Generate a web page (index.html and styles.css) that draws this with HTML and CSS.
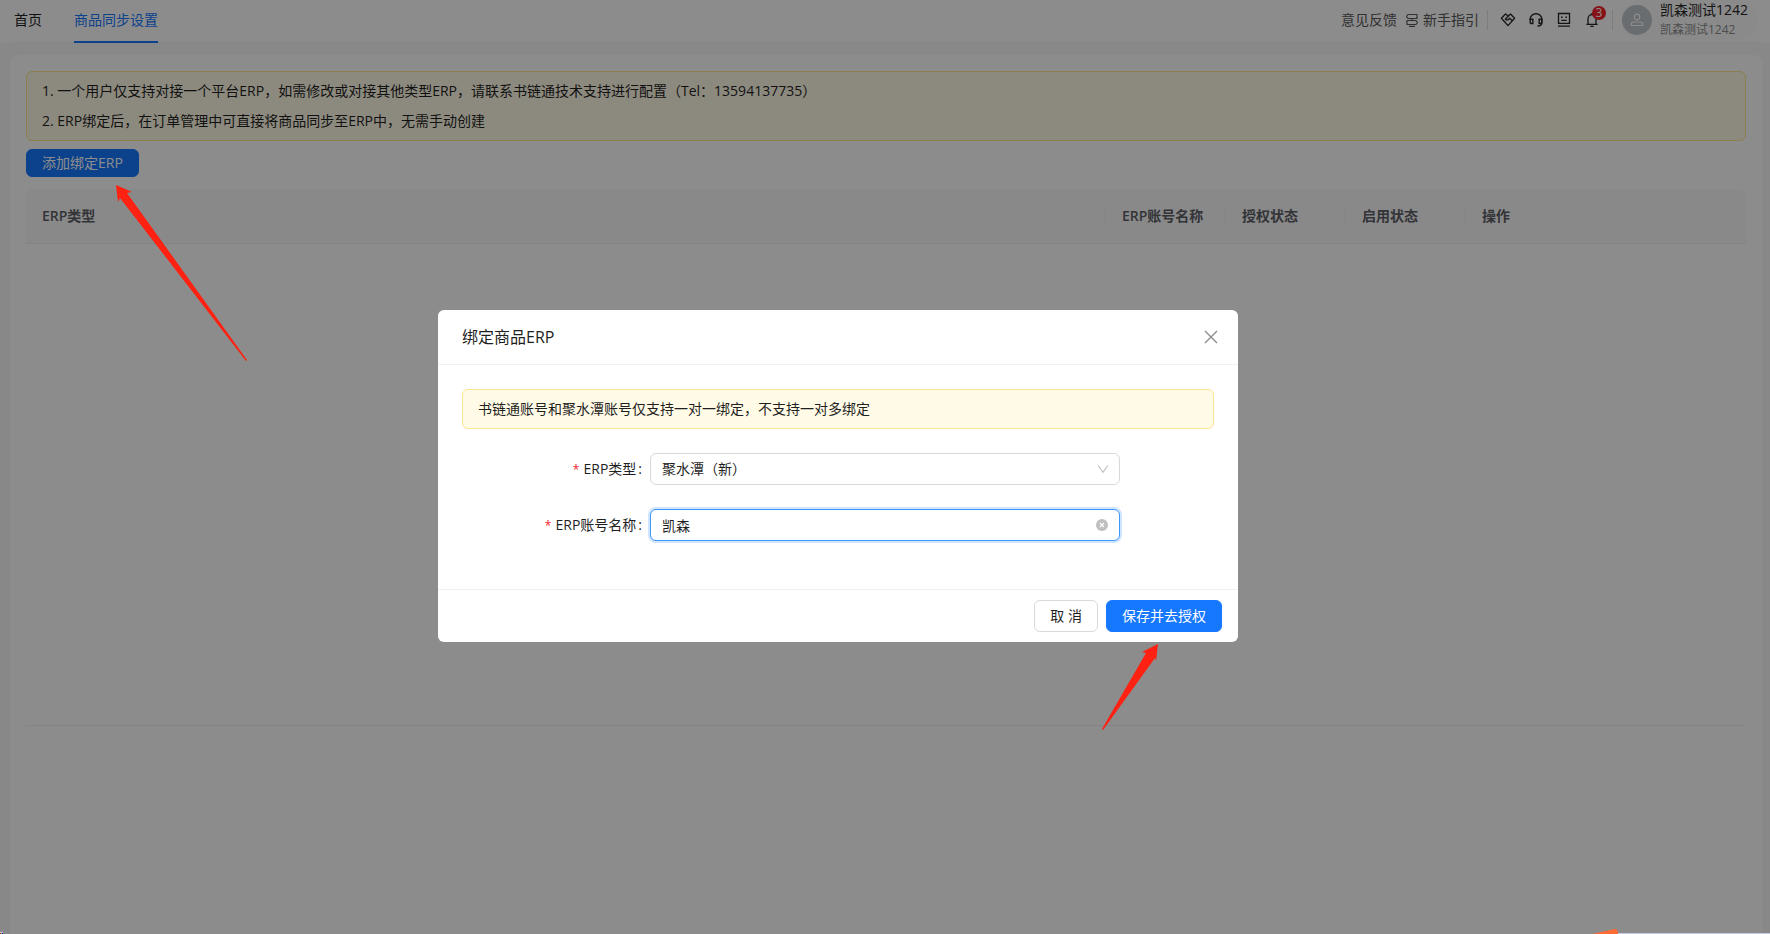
FILE: index.html
```html
<!DOCTYPE html>
<html lang="zh-CN">
<head>
<meta charset="utf-8">
<title>商品同步设置</title>
<link rel="stylesheet" href="styles.css">
</head>
<body>
<div class="page">
  <header class="header">
    <nav class="tabs">
      <a class="tab" href="#home">首页</a>
      <a class="tab tab-active" href="#sync">商品同步设置</a>
    </nav>
    <div class="tools">
      <a class="tool-link" href="#feedback">意见反馈</a>
      <a class="tool-link guide" href="#guide">
        <svg width="14" height="14" viewBox="0 0 14 14" fill="none" stroke="currentColor" stroke-width="1.2" stroke-linejoin="round"><path d="M3 1.500h9v4H3l-1.500-2zM11 7.500H2v4h9l1.500-2zM7 5.500v2M4 13.300h6"/></svg>
        新手指引
      </a>
      <span class="divider"></span>
      <div class="icons">
        <button class="icon-btn" aria-label="合作">
          <svg width="16" height="16" viewBox="0 0 16 16" fill="none" stroke="currentColor" stroke-width="1.300" stroke-linejoin="round"><path d="M8 3.800 5.500 2 1.400 6.200 8 13.600l6.600-7.400L10.500 2 5.400 7c1 1.300 2.300 1.200 3.300.2l.9-.9 3 2.700M3.600 8.600l2.200 2.400"/></svg>
        </button>
        <button class="icon-btn" aria-label="客服">
          <svg width="16" height="16" viewBox="0 0 16 16" fill="none" stroke="currentColor" stroke-width="1.400"><path d="M2.200 8V7a5.800 5.300 0 0 1 11.600 0v4c0 2.500-1.500 3-4.300 3"/><path d="M2.200 7.200h2.600v4.300H3.300a1.100 1.100 0 0 1-1.100-1.100zM13.800 7.200h-2.600v4.300h1.500a1.100 1.100 0 0 0 1.100-1.100z"/></svg>
        </button>
        <button class="icon-btn" aria-label="助手">
          <svg width="16" height="16" viewBox="0 0 16 16" fill="none" stroke="currentColor" stroke-width="1.300"><path d="M2.500 1.500h11v9.800h-11zM2 14.200h12M5.300 8.300h5.400"/><path d="M5 5.200h1.600M9.400 5.200H11" stroke-width="1.500"/></svg>
        </button>
        <button class="icon-btn" aria-label="通知">
          <svg width="16" height="16" viewBox="0 0 16 16" fill="none" stroke="currentColor" stroke-width="1.300"><path d="M2.500 12.300h11M4 12.300V7a4 4.500 0 0 1 8 0v5.300M8 2.500V1M6.300 14.300h3.400"/></svg>
          <span class="badge">3</span>
        </button>
      </div>
      <span class="divider"></span>
      <div class="user">
        <span class="avatar">
          <svg width="14" height="14" viewBox="0 0 14 14" fill="none" stroke="currentColor" stroke-width="1.200"><circle cx="7" cy="4" r="2.800"/><path d="M1.300 12.500v-1.200c0-1.500 1-2.300 2.500-2.300h6.400c1.500 0 2.500.8 2.500 2.300v1.200z"/></svg>
        </span>
        <span class="user-text"><span class="user-name">凯森测试1242</span><span class="user-sub">凯森测试1242</span></span>
      </div>
    </div>
  </header>

  <main class="card">
    <ol class="notice">
      <li>1. 一个用户仅支持对接一个平台ERP，如需修改或对接其他类型ERP，请联系书链通技术支持进行配置（Tel：13594137735）</li>
      <li>2. ERP绑定后，在订单管理中可直接将商品同步至ERP中，无需手动创建</li>
    </ol>
    <button class="btn btn-primary btn-add">添加绑定ERP</button>
    <div class="table-area">
      <table class="table">
        <thead>
          <tr><th>ERP类型</th><th class="col">ERP账号名称</th><th class="col">授权状态</th><th class="col">启用状态</th><th class="col-last">操作</th></tr>
        </thead>
      </table>
    </div>
  </main>
</div>

<div class="mask">
  <section class="modal" role="dialog" aria-labelledby="dlg-title">
    <div class="modal-head">
      <h2 class="modal-title" id="dlg-title">绑定商品ERP</h2>
      <button class="close" aria-label="关闭">
        <svg width="14" height="14" viewBox="0 0 14 14" fill="none" stroke="currentColor" stroke-width="1.400"><path d="M1 1l12 12M13 1 1 13"/></svg>
      </button>
    </div>
    <div class="modal-body">
      <p class="tip">书链通账号和聚水潭账号仅支持一对一绑定，不支持一对多绑定</p>
      <div class="row">
        <label class="label" for="type"><span class="req">*</span>ERP类型<span class="colon">:</span></label>
        <div class="field">
          <select class="control" id="type"><option>聚水潭（新）</option></select>
          <svg class="suffix" width="12" height="12" viewBox="0 0 12 12" fill="none" stroke="currentColor" stroke-width="1.100"><path d="M1.200 2.500 6 9.300l4.800-6.800"/></svg>
        </div>
      </div>
      <div class="row">
        <label class="label" for="name"><span class="req">*</span>ERP账号名称<span class="colon">:</span></label>
        <div class="field">
          <input class="control control-focus" id="name" type="text" value="凯森">
          <button class="suffix clear" aria-label="清除">
            <svg width="12" height="12" viewBox="0 0 12 12"><circle cx="6" cy="6" r="6" fill="#bfbfbf"/><path d="m4 4 4 4m0-4L4 8" stroke="#fff" stroke-width="1.100"/></svg>
          </button>
        </div>
      </div>
    </div>
    <div class="modal-foot">
      <button class="btn btn-default">取 消</button>
      <button class="btn btn-primary">保存并去授权</button>
    </div>
  </section>
</div>

<svg class="arrow arrow-add" width="132" height="178" viewBox="0 0 132 178"><path d="M0 0 16 7l-5 1 120 167-1 1L4 13l-2 4z" fill="#ff2111"/></svg>
<svg class="arrow arrow-save" width="58" height="88" viewBox="0 0 58 88"><path d="M56 0 40 8l4 1L0 85l1 1 52-72 1 3z" fill="#ff2111"/></svg>
<svg class="corner corner-right" viewBox="0 0 178 6" width="178" height="6"><path d="M25 5h153v1H25z" fill="#c3cde8"/><path d="M0 6 23 1q3 0 3 5z" fill="#ff6b35"/></svg>
<svg class="corner corner-left" viewBox="0 0 3 2" width="3" height="2"><path d="M0 0h3v1H0z" fill="#c3cde8"/><path d="M0 1h1v1H0z" fill="#d00"/><path d="M1 1h1v1H1z" fill="#6c6"/><path d="M2 1h1v1H2z" fill="#009"/></svg>
</body>
</html>
```
FILE: styles.css
```css
* { box-sizing: border-box; }
body {
  margin: 0;
  background: #f7f8f8;
  color: #1f1f1f;
  font: 14px/22px "Open Sans", "Noto Sans CJK SC", sans-serif;
}
a { color: inherit; text-decoration: none; }
button { font: inherit; cursor: pointer; }
.page { display: flex; flex-direction: column; height: 100vh; overflow: hidden; }

.header {
  display: flex;
  justify-content: space-between;
  flex: none;
  height: 43px;
  padding: 0 12px 0 14px;
  background: linear-gradient(#f0f0f0, #f0f0f0) 14px 42px / calc(100% - 26px) 1px no-repeat, #fff;
}
.tabs { display: flex; gap: 32px; }
.tab { height: 43px; line-height: 40px; }
.tab-active { color: #1677ff; border-bottom: 2px solid #1677ff; }
.tools { display: flex; align-items: center; height: 40px; color: #262626; }
.tool-link { color: #595959; }
.guide { display: flex; align-items: center; gap: 4px; margin-left: 8px; }
.divider { width: 1px; height: 20px; margin: 0 8px; background: #e4e4e4; }
.icons { display: flex; gap: 4px; }
.icon-btn { position: relative; display: flex; padding: 6px 4px; border: 0; background: none; color: #262626; }
.badge {
  position: absolute;
  top: 0;
  right: -2px;
  min-width: 14px;
  border-radius: 7px;
  background: #f5222d;
  color: #fff;
  font-size: 12px;
  line-height: 14px;
  text-align: center;
}
.user { display: flex; align-items: center; gap: 8px; height: 40px; padding: 0 10px 0 1px; border-radius: 20px; background: #fcfcfc; }
.avatar { display: flex; align-items: center; justify-content: center; width: 30px; height: 30px; border-radius: 50%; background: #bfc6cd; color: #fff; }
.user-text { display: flex; flex-direction: column; line-height: 20px; }
.user-sub { color: #8c8c8c; font-size: 12px; }

.card { flex: 1; margin: 12px 8px 0 10px; padding: 16px; border-radius: 8px 8px 0 0; background: #fff; }
.notice { margin: 0 0 8px; padding: 4px 15px; border: 1px solid #ffe58f; border-radius: 6px; background: #fffbe6; list-style: none; line-height: 30px; }
.btn { height: 32px; padding: 0 15px; border: 1px solid #d9d9d9; border-radius: 6px; background: #fff; color: #1f1f1f; }
.btn-primary { border-color: #1677ff; background: #1677ff; color: #fff; }
.btn-add { display: block; height: 28px; line-height: 20px; }
.table-area { height: 537px; margin-top: 12px; border-bottom: 1px solid #f0f0f0; }
.table { width: 100%; table-layout: fixed; border-collapse: separate; border-spacing: 0; border-radius: 8px 8px 0 0; background: #fafafa; }
.table th { position: relative; height: 55px; padding: 0 16px; border-bottom: 1px solid #f0f0f0; color: #5d6066; font-weight: 600; text-align: left; }
.table th:not(:last-child)::after { content: ""; position: absolute; top: 16px; right: 0; width: 1px; height: 22px; background: #f0f0f0; }
.col { width: 120px; }
.col-last { width: 280px; }

.mask { position: fixed; inset: 0; display: flex; align-items: flex-start; justify-content: center; padding: 310px 94px 0 0; background: rgba(0, 0, 0, .45); }
.modal { width: 800px; border-radius: 6px; background: #fff; }
.modal-head { display: flex; align-items: center; justify-content: space-between; height: 55px; padding: 0 20px 0 24px; border-bottom: 1px solid #f0f0f0; }
.modal-title { margin: 0; font-size: 16px; font-weight: 400; }
.close { display: flex; padding: 0; border: 0; background: none; color: #8c8c8c; }
.modal-body { padding: 24px 24px 48px; }
.tip { margin: 0 0 24px; padding: 8px 15px; border: 1px solid #ffe58f; border-radius: 6px; background: #fffbe6; }
.row { display: grid; grid-template-columns: 188px 470px; height: 32px; align-items: center; }
.row + .row { margin-top: 24px; }
.label { text-align: right; white-space: nowrap; }
.req { margin-right: 4px; color: #f5222d; font-size: 12px; }
.colon { margin: 0 8px 0 2px; }
.field { position: relative; }
.control { display: block; width: 100%; height: 32px; padding: 0 11px; border: 1px solid #d9d9d9; border-radius: 6px; outline: 0; appearance: none; background: #fff; color: #1f1f1f; font: inherit; }
.control-focus { border-color: #4096ff; box-shadow: 0 0 0 2px #cfe4ff; }
.suffix { position: absolute; top: 10px; right: 11px; color: #bfbfbf; pointer-events: none; }
.clear { right: 12px; display: flex; padding: 0; border: 0; background: none; pointer-events: auto; }
.modal-foot { display: flex; justify-content: flex-end; gap: 8px; padding: 10px 16px; border-top: 1px solid #f0f0f0; }

.arrow { position: absolute; }
.arrow-add { left: 116px; top: 185px; }
.arrow-save { left: 1102px; top: 644px; }
.corner { position: fixed; bottom: 0; }
.corner-right { right: 0; }
.corner-left { left: 0; }
```
